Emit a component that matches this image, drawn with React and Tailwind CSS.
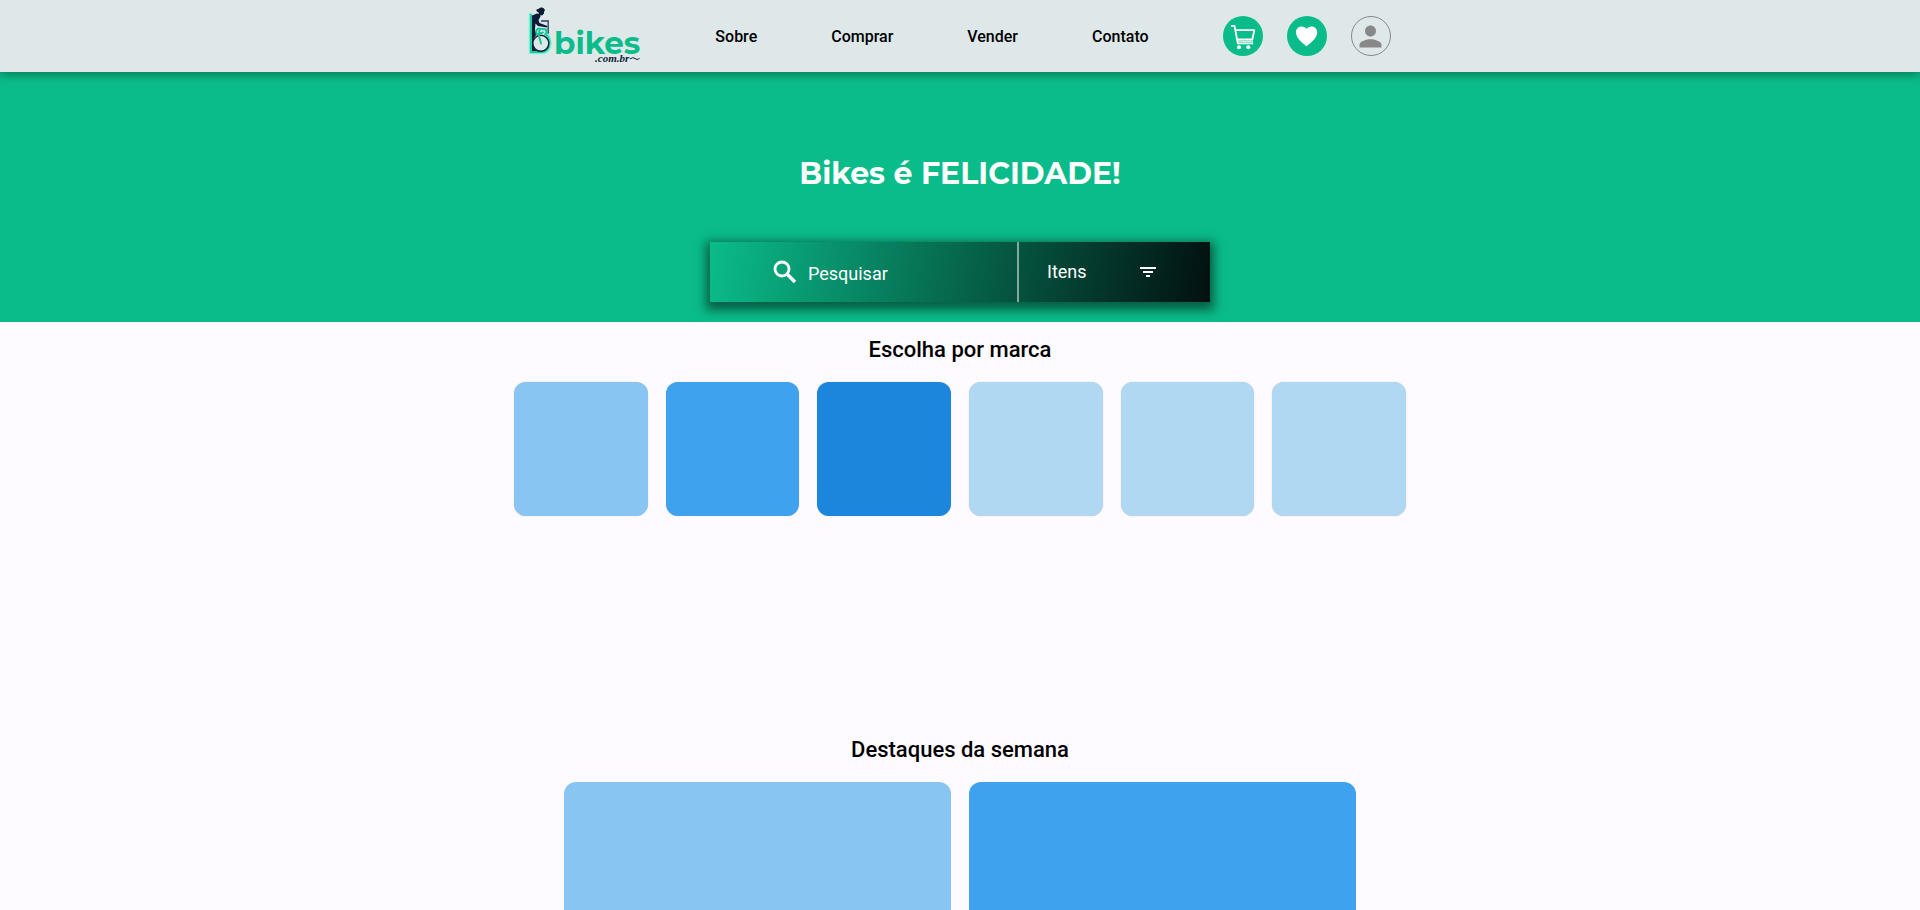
import { MdPerson } from "react-icons/md";

const links = ["Sobre", "Comprar", "Vender", "Contato"];
const brands = ["bg-[#88c5f2]", "bg-[#3fa2ee]", "bg-[#1c86dc]", "bg-[#b0d8f3]", "bg-[#b0d8f3]", "bg-[#b0d8f3]"];
const highlights = ["bg-[#88c5f2]", "bg-[#3fa2ee]"];

function Logo() {
  return (
    <svg viewBox="0 0 112 58" className="h-[58px] w-28 overflow-visible" role="img" aria-label="bikes.com.br">
      <path d="M1.500 6V45.500H13c5 0 8-4 8-9.500 0-5-2-8-5-10" fill="none" stroke="#6af0d0" strokeWidth="3.500" strokeLinejoin="round" opacity=".8" />
      <path d="M2 7V45H13c4.500 0 7.500-4 7.500-9 0-4.500-2-7.500-5-9.500" fill="none" stroke="#14cc9e" strokeWidth="1.800" />
      <path d="M3 8.500 8 6.500 11 7 11.500 9.500 9.500 13 10.500 16 18.500 19 18 20.500 9 19 6.500 16.500 6 22 6.500 25 8 27 5 31 4 36 5 41 8 44H3Z" fill="#0b1c38" />
      <path d="M8 4.500C6.500 3 8 1.500 9.500 2 11-.5 15.500 0 16 3.500L15 4.500 15 6.500 13 8.500 10.500 8 9.500 5.500Z" fill="#0b1c38" />
      <path d="M12 14H19.200V26.500" fill="none" stroke="#2a3a54" strokeWidth="1.300" />
      <circle cx="11.800" cy="36.300" r="8" fill="#dfe8e9" stroke="#0b1c38" strokeWidth="1.400" />
      <path d="M7.500 27.500C7 23 8 21 10.500 21.500L17 22.500 17.500 26M9 27 14 25.500M10.500 22 10 29 12 36.500" fill="none" stroke="#14c797" strokeWidth="1.900" strokeLinecap="round" strokeLinejoin="round" />
      <text x="25" y="47" fontFamily="Montserrat, Lato, sans-serif" fontWeight="700" fontSize="31" fill="#0abc89">bikes</text>
      <text x="66" y="55" fontFamily="'Liberation Serif', serif" fontStyle="italic" fontWeight="700" fontSize="11" fill="#0b1c38">.com.br</text>
      <path d="M101 52q3-2.500 5-.5t4.500 0" fill="none" stroke="#0b1c38" strokeWidth="1" />
    </svg>
  );
}

function CartIcon() {
  return (
    <svg viewBox="0 0 40 40" className="size-10" fill="none" stroke="white" strokeWidth="1.800" aria-hidden="true">
      <path d="M8 9.800h3.500l3.300 17.600h15.400M12.500 14.200h18.800l-2 9.300H14" strokeLinejoin="round" />
      <path d="M14.500 25.300h15.500" strokeWidth="1" />
      <circle cx="16" cy="31.200" r="2" fill="white" stroke="none" />
      <circle cx="25.300" cy="31.200" r="2" fill="white" stroke="none" />
    </svg>
  );
}

function HeartIcon() {
  return (
    <svg viewBox="0 0 40 40" className="size-10" fill="white" aria-hidden="true">
      <path d="M19.500 30.300C15.500 27 9 22.500 9 16.300c0-3.600 2.400-5.900 5.500-5.900 2.200 0 4 .9 5 2.400 1-1.500 2.800-2.400 5-2.400 3.100 0 5.700 2.300 5.700 5.900 0 6.200-6.700 10.700-10.700 14Z" />
    </svg>
  );
}

function SearchIcon() {
  return (
    <svg viewBox="0 0 30 30" className="size-[30px] shrink-0" fill="none" stroke="white" aria-hidden="true">
      <circle cx="12" cy="12" r="7" strokeWidth="2.800" />
      <path d="M17 17 25 25" strokeWidth="3.400" />
    </svg>
  );
}

function FilterIcon() {
  return (
    <svg viewBox="0 0 16 10" className="h-2.5 w-4" fill="white" aria-hidden="true">
      <path d="M0 0h16v2H0zM3 4h10v2H3zM6 8h4v2H6z" />
    </svg>
  );
}

export default function App() {
  return (
    <div className="min-h-screen bg-[#fdfbff] font-[Roboto,sans-serif] text-black">
      <header className="relative z-10 flex h-18 items-center justify-center bg-[#dfe8e9] px-4 shadow-[0_2px_10px_rgba(0,0,0,0.4)]">
        <div className="flex items-center gap-[74px]">
          <a href="#inicio"><Logo /></a>
          <nav className="flex gap-[74px] pt-0.5">
            {links.map((l) => (
              <a key={l} href={`#${l.toLowerCase()}`} className="text-base font-medium">{l}</a>
            ))}
          </nav>
          <div className="flex gap-6">
            <button aria-label="Carrinho" className="size-10 rounded-full bg-[#0abc89]"><CartIcon /></button>
            <button aria-label="Favoritos" className="size-10 rounded-full bg-[#0abc89]"><HeartIcon /></button>
            <button aria-label="Perfil" className="flex size-10 items-center justify-center rounded-full border border-[#888888] text-[#888888]">
              <MdPerson className="size-[33px] shrink-0" />
            </button>
          </div>
        </div>
      </header>

      <main>
        <section className="flex h-[250px] flex-col items-center justify-end gap-12 bg-[#0abc89] pb-5">
          <h1 className="font-[Montserrat,'Open_Sans',sans-serif] text-[30px] leading-10 font-bold text-white">Bikes é FELICIDADE!</h1>
          <form className="flex h-15 w-full max-w-[500px] bg-[linear-gradient(100deg,#0abc89,#021010)] text-lg text-white shadow-[0_4px_10px_4px_rgba(0,0,0,0.5)]">
            <label className="flex min-w-0 flex-1 items-center gap-2 pl-[60px]">
              <SearchIcon />
              <input aria-label="Pesquisar" placeholder="Pesquisar" className="w-full min-w-0 pt-1 outline-none placeholder:text-white" />
            </label>
            <button type="button" className="flex w-[193px] items-center justify-between border-l-2 border-white/50 pr-[54px] pl-7">
              Itens
              <FilterIcon />
            </button>
          </form>
        </section>

        <section className="mx-auto flex h-[400px] max-w-[892px] flex-col">
          <h2 className="pt-3 pb-4 text-center text-[22px] leading-8 font-medium">Escolha por marca</h2>
          <div className="grid grid-cols-6 gap-[18px]">
            {brands.map((c, i) => (
              <a key={i} href={`#marca-${i + 1}`} aria-label={`Marca ${i + 1}`} className={`aspect-square rounded-xl shadow-[0_0_1px_rgba(0,0,0,0.3)] ${c}`} />
            ))}
          </div>
        </section>

        <section className="mx-auto h-[188px] max-w-[792px] overflow-hidden">
          <h2 className="pt-3 pb-4 text-center text-[22px] leading-8 font-medium">Destaques da semana</h2>
          <div className="grid grid-cols-2 gap-[18px]">
            {highlights.map((c, i) => (
              <a key={i} href={`#destaque-${i + 1}`} aria-label={`Destaque ${i + 1}`} className={`h-60 rounded-xl ${c}`} />
            ))}
          </div>
        </section>
      </main>
    </div>
  );
}
